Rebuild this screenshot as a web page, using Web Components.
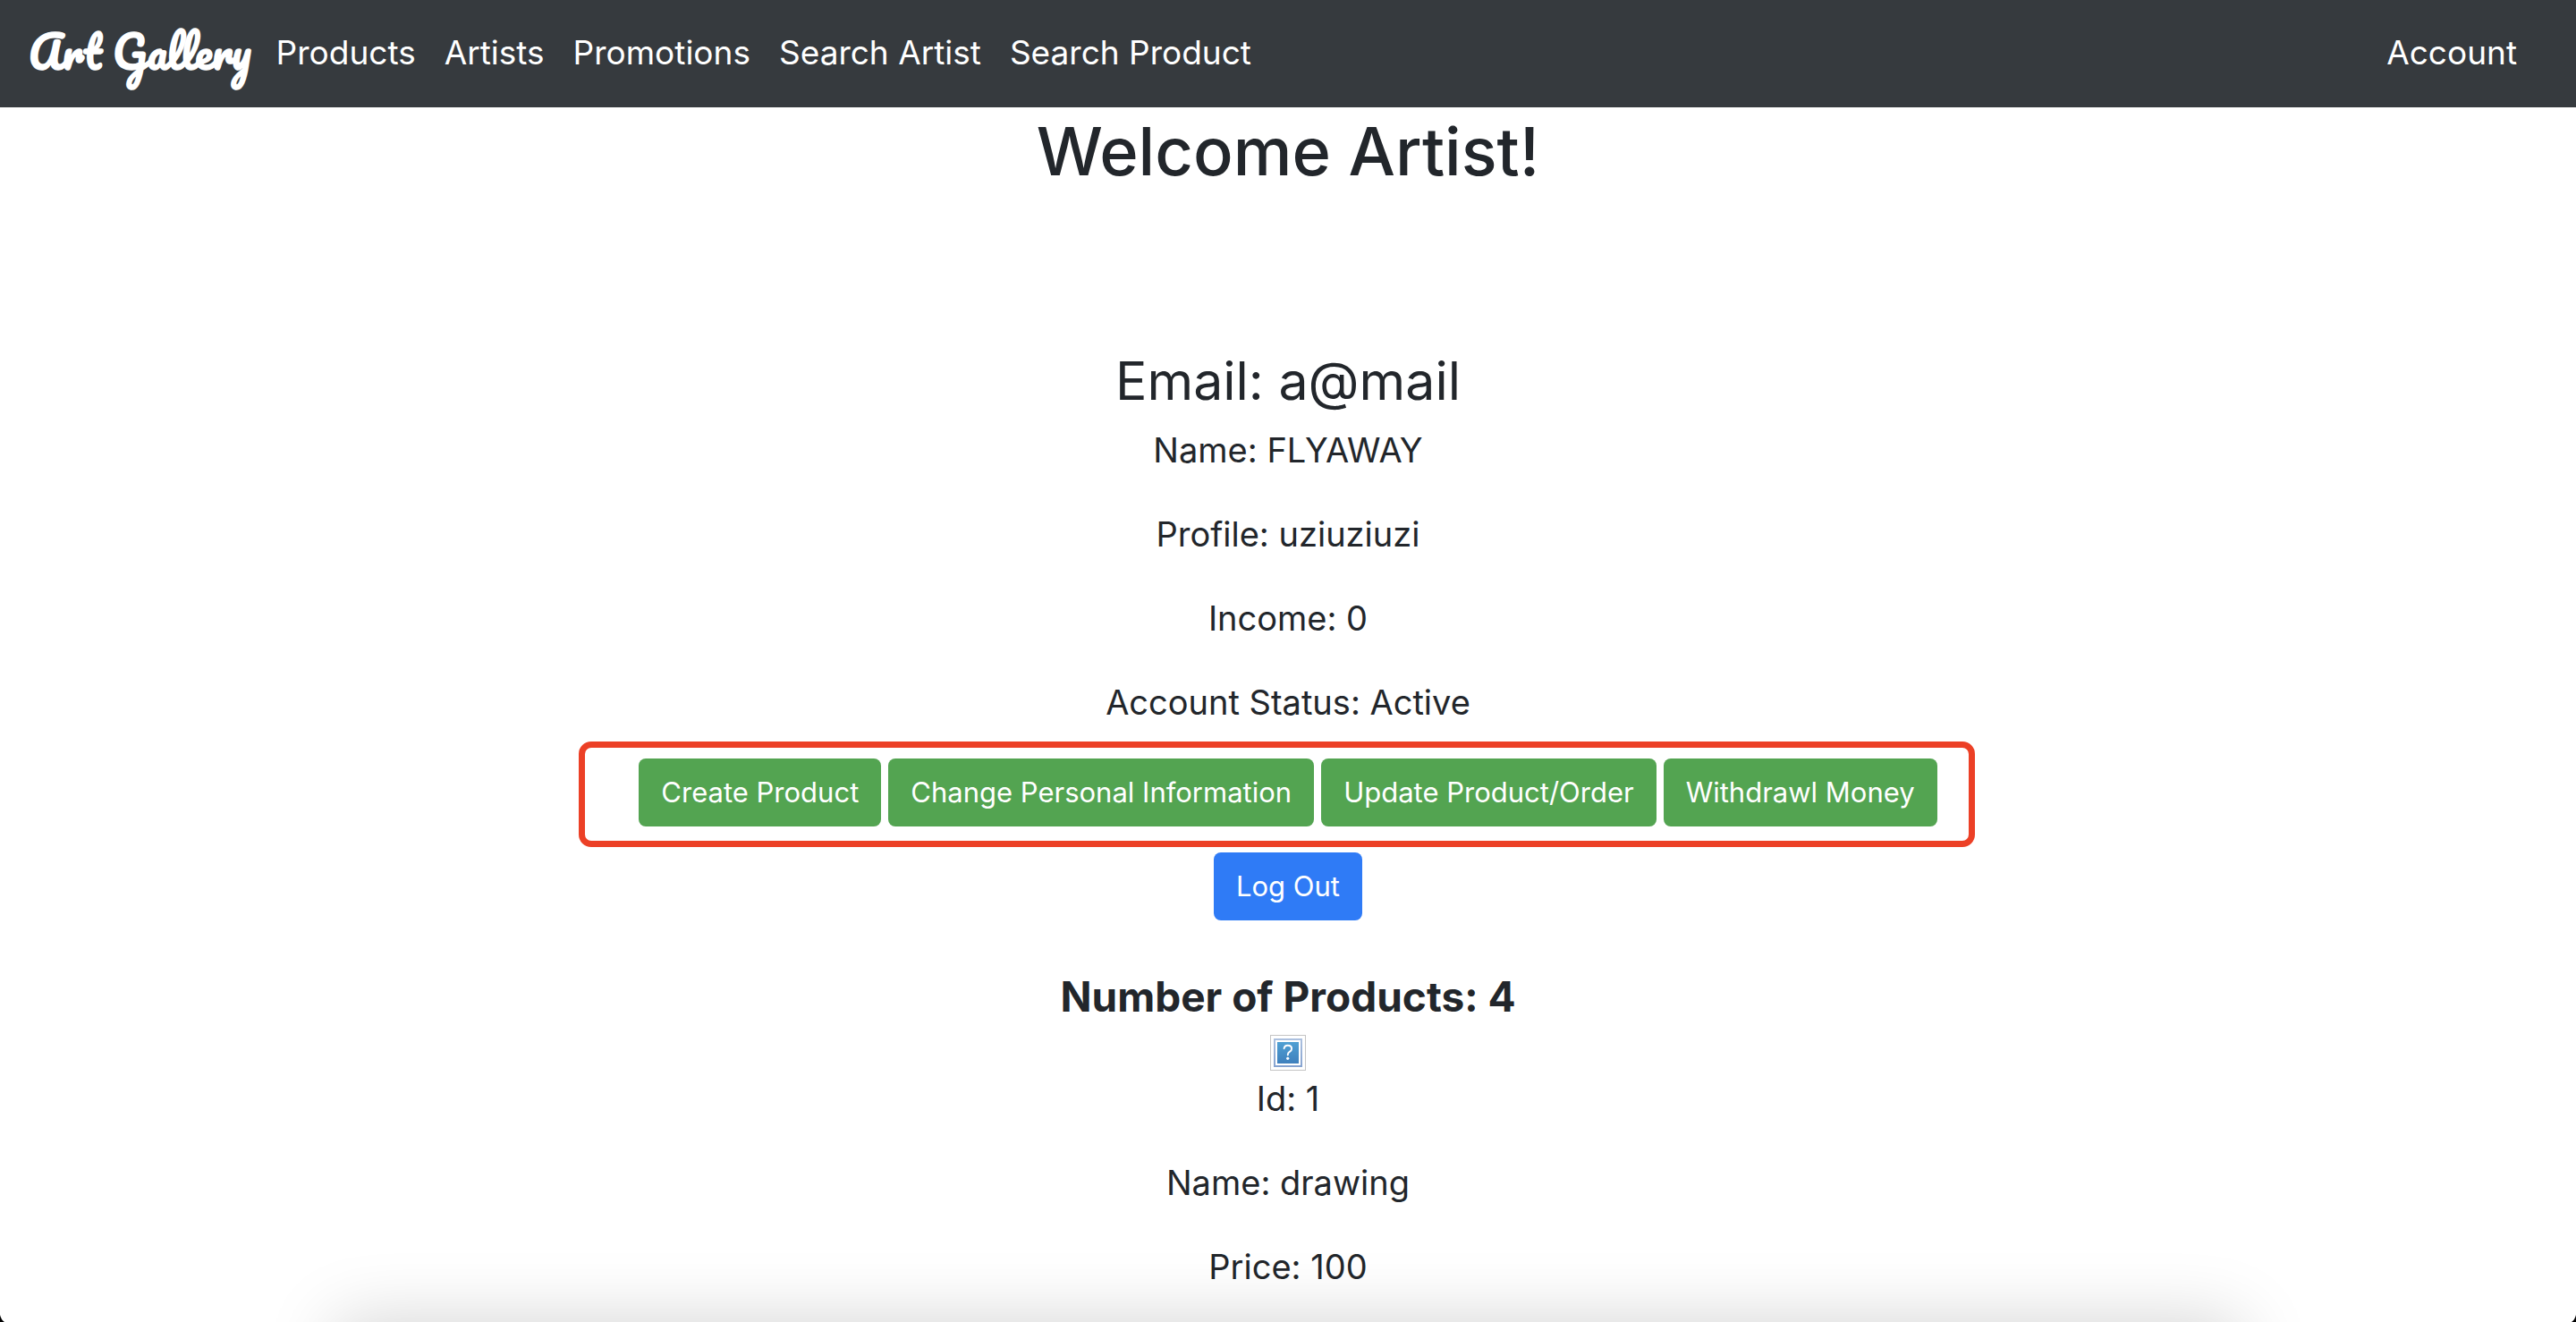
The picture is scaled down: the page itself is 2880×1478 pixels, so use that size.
<!DOCTYPE html>
<html lang="en">
<head>
<meta charset="utf-8">
<title>Art Gallery</title>
<style>
body{margin:0;background:#fff;color:#22262b;font-family:Inter,"Liberation Sans",sans-serif;font-size:38px;line-height:62px}
</style>
</head>
<body>
<gallery-nav>
  <nav-link href="#products">Products</nav-link>
  <nav-link href="#artists">Artists</nav-link>
  <nav-link href="#promotions">Promotions</nav-link>
  <nav-link href="#search-artist">Search Artist</nav-link>
  <nav-link href="#search-product">Search Product</nav-link>
  <nav-link slot="end" href="#account">Account</nav-link>
</gallery-nav>
<artist-page>
  <span slot="title">Welcome Artist!</span>
  <span slot="email">Email: a@mail</span>
  <info-line>Name: FLYAWAY</info-line>
  <info-line>Profile: uziuziuzi</info-line>
  <info-line>Income: 0</info-line>
  <info-line>Account Status: Active</info-line>
  <action-group slot="actions">
    <action-button>Create Product</action-button>
    <action-button>Change Personal Information</action-button>
    <action-button>Update Product/Order</action-button>
    <action-button>Withdrawl Money</action-button>
  </action-group>
  <action-button slot="logout" kind="primary">Log Out</action-button>
  <product-list slot="products" heading="Number of Products: 4">
    <info-line>Id: 1</info-line>
    <info-line>Name: drawing</info-line>
    <info-line>Price: 100</info-line>
  </product-list>
</artist-page>
<window-edge></window-edge>
<script>
function define(name, html, setup) {
  const t = document.createElement('template');
  t.innerHTML = html;
  customElements.define(name, class extends HTMLElement {
    constructor() {
      super();
      this.attachShadow({ mode: 'open' }).append(t.content.cloneNode(true));
    }
    connectedCallback() { if (setup) setup(this, this.shadowRoot); }
  });
}

define('nav-link', `<style>
:host{display:block}
a{color:#fff;text-decoration:none;font-size:37px;line-height:60px;white-space:nowrap}
</style><a><slot></slot></a>`, (el, root) => {
  root.querySelector('a').href = el.getAttribute('href');
});

define('gallery-nav', `<style>
:host{display:block}
nav{display:flex;align-items:center;height:120px;box-sizing:border-box;padding:0 66px 4px 32px;background:#363a3e}
.brand{color:#fff;text-decoration:none;white-space:nowrap;font:700 48px/60px Pacifico,Lato,cursive;margin-right:28px}
.links{display:flex;gap:32px}
.end{margin-left:auto}
</style><nav><a class="brand" href="#home">Art Gallery</a><div class="links"><slot></slot></div><div class="end"><slot name="end"></slot></div></nav>`);

define('info-line', `<style>
:host{display:block}
p{margin:0}
</style><p><slot></slot></p>`);

define('action-button', `<style>
:host{display:block}
button{display:block;margin:0;border:0;border-radius:8px;padding:14px 25px;background:#53a451;color:#fff;font:400 31px/48px Inter,"Liberation Sans",sans-serif;white-space:nowrap;cursor:pointer}
:host([kind=primary]) button{background:#2f7bf6}
</style><button type="button"><slot></slot></button>`);

define('action-group', `<style>
:host{display:flex;gap:8px;position:relative}
.mark{position:absolute;inset:-19px -42px -23px -67px;border:7px solid #ec4026;border-radius:14px;pointer-events:none}
</style><slot></slot><div class="mark"></div>`);

define('broken-image', `<style>
:host{display:block;width:40px;height:40px}
svg{display:block}
</style><svg width="40" height="40" viewBox="0 0 40 40" role="img" aria-label="Missing image">
<defs><linearGradient id="a" x2="0" y2="1"><stop stop-color="#4fa0d3"/><stop offset="1" stop-color="#3f80bd"/></linearGradient>
<linearGradient id="b" x2="0" y2="1"><stop stop-color="#adc1df"/><stop offset="1" stop-color="#86a3d0"/></linearGradient></defs>
<rect x=".5" y=".5" width="39" height="39" fill="#fff" stroke="#c4c4c4"/>
<rect x="4" y="4" width="32" height="32" fill="url(#b)"/>
<rect x="6" y="6" width="28" height="28" fill="#fff"/>
<rect x="8" y="8" width="24" height="24" fill="url(#a)"/>
<path d="M15.6 15.2c.3-2.2 1.9-3.4 4.2-3.4 2.500 0 4.300 1.400 4.300 3.600 0 1.700-.9 2.600-2.300 3.500-1.400.9-2 1.600-2 3v.7" fill="none" stroke="#fff" stroke-width="1.900" stroke-linecap="round"/>
<circle cx="19.700" cy="26.300" r="1.600" fill="#fff"/></svg>`);

define('product-list', `<style>
:host{display:flex;flex-direction:column;align-items:center}
h4{margin:0 0 14px;font-size:46px;line-height:58px;font-weight:700}
.rows{display:flex;flex-direction:column;gap:32px;text-align:center}
</style><h4></h4><broken-image></broken-image><div class="rows"><slot></slot></div>`, (el, root) => {
  root.querySelector('h4').textContent = el.getAttribute('heading');
});

define('artist-page', `<style>
:host{display:block}
main{display:flex;flex-direction:column;align-items:center;text-align:center}
h1{margin:0 0 170px;font-size:74px;line-height:98px;font-weight:500}
h2{margin:0 0 8px;font-size:59px;line-height:76px;font-weight:400}
.rows{display:flex;flex-direction:column;gap:32px;margin-bottom:32px}
.logout{margin:29px 0 56px}
</style><main><h1><slot name="title"></slot></h1><h2><slot name="email"></slot></h2><div class="rows"><slot></slot></div><slot name="actions"></slot><div class="logout"><slot name="logout"></slot></div><slot name="products"></slot></main>`);

define('window-edge', `<style>
:host{position:fixed;inset:0;overflow:hidden;pointer-events:none}
.shadow{position:absolute;top:100%;left:376px;right:376px;height:200px;box-shadow:0 0 80px rgba(0,0,0,.18)}
svg{position:absolute;bottom:0;left:0}
svg.r{left:auto;right:0}
</style><div class="shadow"></div><svg width="5" height="8"><path d="M0 0Q1 5 5 8H0Z"/></svg><svg class="r" width="5" height="8"><path d="M5 0Q4 5 0 8H5Z"/></svg>`);
</script>
</body>
</html>
